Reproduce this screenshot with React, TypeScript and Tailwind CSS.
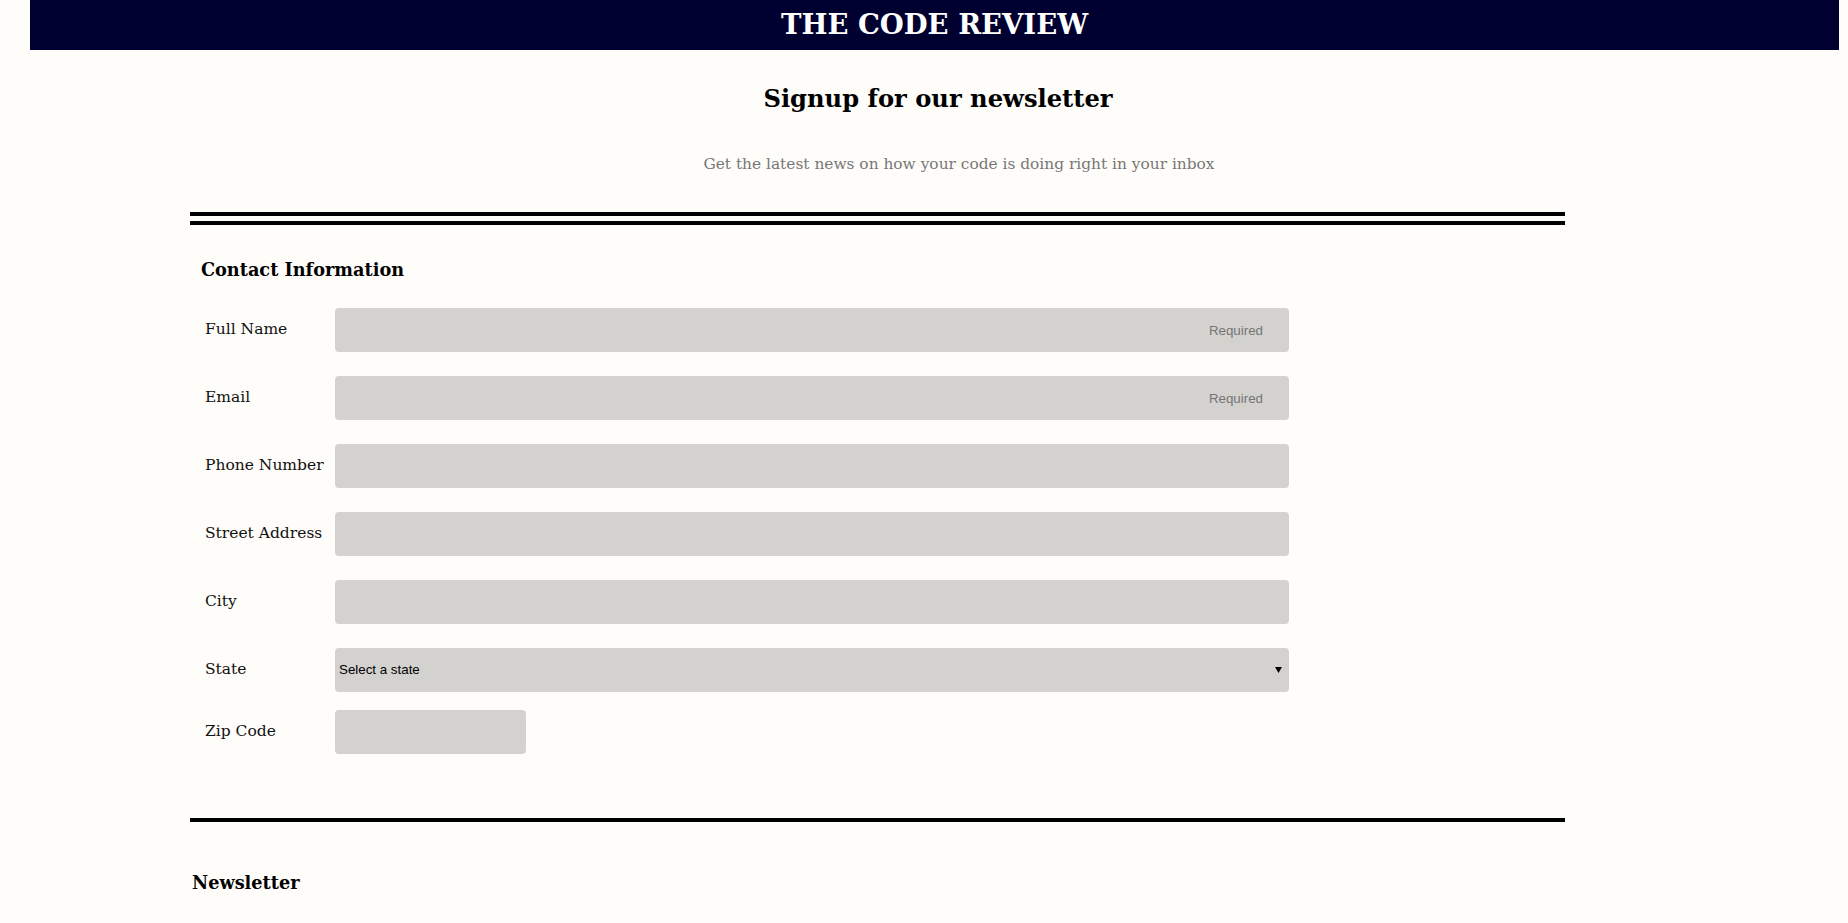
import React from 'react';

// Newsletter signup page: dark masthead, intro copy and the contact form.

const serif = "font-['DejaVu_Serif',serif]";
const sans = "font-['Liberation_Sans',Arial,sans-serif]";

type Field = {
  label: string;
  required?: boolean;
};

const fields: Field[] = [
  { label: 'Full Name', required: true },
  { label: 'Email', required: true },
  { label: 'Phone Number' },
  { label: 'Street Address' },
  { label: 'City' },
];

function FieldRow({ label, required }: Field) {
  return (
    <div className="flex items-center h-[44px]">
      <label className={`w-[145px] shrink-0 pl-[15px] text-[15.5px] text-[#111] ${serif}`}>{label}</label>
      <input
        type="text"
        placeholder={required ? 'Required' : ''}
        className={`w-[954px] h-[44px] rounded-[4px] bg-[#d3d2cf] pr-[26px] pl-[4px] text-right text-[13.33px] text-black placeholder:text-[#757575] outline-none ${sans}`}
      />
    </div>
  );
}

export default function App() {
  return (
    <div className="min-h-screen bg-[#fffdf9]">
      {/* Masthead */}
      <header className="ml-[30px] w-[1809px] h-[50px] bg-[#000030] flex items-center justify-center">
        <h1 className={`text-[27.5px] font-bold text-white leading-none ${serif}`}>THE CODE REVIEW</h1>
      </header>

      {/* Intro */}
      <h2 className={`mt-[31px] pl-[28px] text-center text-[24.2px] font-bold leading-[36px] text-black ${serif}`}>
        Signup for our newsletter
      </h2>
      <p className={`mt-[35px] pl-[70px] text-center text-[15.4px] leading-[24px] text-[#777] ${serif}`}>
        Get the latest news on how your code is doing right in your inbox
      </p>

      <form className="ml-[190px] w-[1375px] mt-[36px]">
        {/* Contact information */}
        <section>
          <div className="h-[13px] border-y-4 border-black" />
          <h3 className={`mt-[31px] pl-[11px] text-[17.7px] font-bold leading-[28px] text-black ${serif}`}>
            Contact Information
          </h3>
          <div className="mt-[24px] flex flex-col gap-[24px]">
            {fields.map((f) => (
              <FieldRow key={f.label} {...f} />
            ))}
            <div className="flex items-center h-[44px]">
              <label className={`w-[145px] shrink-0 pl-[15px] text-[15.5px] text-[#111] ${serif}`}>State</label>
              <div className="relative w-[954px]">
                <select
                  defaultValue=""
                  className={`w-full h-[44px] appearance-none rounded-[4px] bg-[#d3d2cf] pl-[4px] text-[13.33px] text-black outline-none ${sans}`}
                >
                  <option value="">Select a state</option>
                  <option>Alabama</option>
                  <option>Alaska</option>
                  <option>Arizona</option>
                </select>
                <svg
                  className="absolute right-[7px] top-[19px] pointer-events-none"
                  width="7"
                  height="6"
                  viewBox="0 0 7 6"
                >
                  <path d="M0 0h7L3.5 6z" fill="#000" />
                </svg>
              </div>
            </div>
          </div>
          <div className="mt-[18px] flex items-center h-[44px]">
            <label className={`w-[145px] shrink-0 pl-[15px] text-[15.5px] text-[#111] ${serif}`}>Zip Code</label>
            <input
              type="text"
              className={`w-[191px] h-[44px] rounded-[4px] bg-[#d3d2cf] px-[4px] text-[13.33px] outline-none ${sans}`}
            />
          </div>
        </section>

        {/* Newsletter preferences */}
        <section className="mt-[64px] border-t-4 border-black">
          <h3 className={`mt-[47px] pl-[2px] text-[17.7px] font-bold leading-[28px] text-black ${serif}`}>
            Newsletter
          </h3>
        </section>
      </form>
    </div>
  );
}
